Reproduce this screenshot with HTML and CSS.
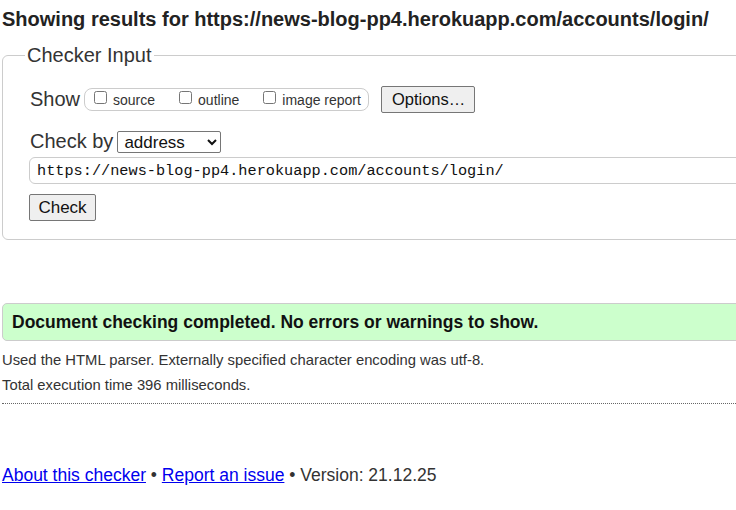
FILE: index.html
```html
<!DOCTYPE html>
<html lang="en">
<head>
<meta charset="utf-8">
<title>Showing results for https://news-blog-pp4.herokuapp.com/accounts/login/ - Nu Html Checker</title>
<link rel="stylesheet" href="styles.css">
</head>
<body>
<div class="page">
  <h2 class="title">Showing results for https://news-blog-pp4.herokuapp.com/accounts/login/</h2>
  <form class="checker">
    <fieldset class="input-box">
      <legend>Checker Input</legend>
      <div class="row show-row">
        <span class="label">Show</span>
        <span class="options">
          <label><input type="checkbox">source</label>
          <label><input type="checkbox">outline</label>
          <label><input type="checkbox">image report</label>
        </span>
        <button type="button" class="btn">Options…</button>
      </div>
      <div class="row by-row">
        <span class="label">Check by</span>
        <select class="sel"><option>address</option></select>
      </div>
      <input class="url" type="text" value="https://news-blog-pp4.herokuapp.com/accounts/login/">
      <div class="check-row">
        <button type="button" class="btn check">Check</button>
      </div>
    </fieldset>
  </form>
  <p class="success">Document checking completed. No errors or warnings to show.</p>
  <p class="details first">Used the HTML parser. Externally specified character encoding was utf-8.</p>
  <p class="details">Total execution time 396 milliseconds.</p>
  <hr class="sep">
  <p class="footer"><a href="#">About this checker</a> • <a href="#">Report an issue</a> • Version: 21.12.25</p>
</div>
</body>
</html>
```
FILE: styles.css
```css
html, body {
  margin: 0;
  padding: 0;
  overflow: hidden;
  background: #fff;
}
body {
  font-family: "Liberation Sans", Arial, sans-serif;
  color: #222;
}
.page {
  width: 1000px;
  padding: 0 0 0 2px;
}
.title {
  margin: 0;
  padding-top: 8px;
  font-size: 20px;
  font-weight: bold;
  color: #222;
  line-height: 22px;
}
.checker {
  margin: 14px 0 0 0;
}
.input-box {
  margin: 0;
  padding: 8px 26px 18px 26px;
  border: 1px solid #ccc;
  border-radius: 6px;
}
.input-box legend {
  font-size: 20px;
  padding: 0 2px;
  margin-left: -4px;
  color: #333;
}
.row {
  display: flex;
  align-items: center;
  margin-left: 1px;
}
.label {
  font-size: 20px;
  color: #333;
  margin-right: 4px;
}
.show-row {
  margin-top: 11px;
}
.options {
  display: inline-flex;
  align-items: center;
  border: 1px solid #ccc;
  border-radius: 8px;
  height: 21px;
  padding: 0 7px 0 9px;
  gap: 24px;
  margin-right: 12px;
}
.options label {
  font-size: 14px;
  color: #333;
  display: inline-flex;
  align-items: flex-end;
}
.options input {
  margin: 0 6px 4px 0;
  width: 13px;
  height: 13px;
}
.btn {
  font-family: "Liberation Sans", Arial, sans-serif;
  font-size: 16.5px;
  color: #111;
  background: #efefef;
  border: 1px solid #767676;
  border-radius: 2px;
  padding: 3px 10px;
  height: 27px;
  width: 94px;
}
.btn.check {
  width: 67px;
  font-size: 17px;
  padding: 3px 0;
}
.by-row {
  margin-top: 17px;
}
.sel {
  font-family: "Liberation Sans", Arial, sans-serif;
  font-size: 17px;
  box-sizing: border-box;
  height: 22px;
  width: 104px;
  margin-left: 0;
  border: 1px solid #767676;
  border-radius: 2px;
  background: #fff;
  color: #111;
  padding: 0 2px;
}
.url {
  display: block;
  box-sizing: border-box;
  width: 900px;
  height: 27px;
  margin: 4px 0 10px 0;
  padding: 0 7px;
  font-family: "Liberation Mono", "DejaVu Sans Mono", monospace;
  font-size: 15.25px;
  color: #111;
  border: 1px solid #ccc;
  border-radius: 6px;
}
.check-row {
  display: flex;
}
.success {
  margin: 63px 0 0 0;
  height: 38px;
  box-sizing: border-box;
  line-height: 36px;
  background: #ccffcc;
  border: 1px solid #ccc;
  border-radius: 5px;
  padding: 0 9px;
  font-size: 17.5px;
  font-weight: bold;
  color: #111;
}
.details {
  margin: 7px 0 0 0;
  font-size: 14.8px;
  color: #333;
  line-height: 18px;
}
.details.first {
  margin-top: 10px;
}
.sep {
  margin: 9px 0 0 0;
  border: 0;
  border-top: 1px dotted #666;
  height: 0;
}
.footer {
  margin: 61px 0 0 0;
  font-size: 17.5px;
  color: #333;
}
.footer a {
  color: #0000ee;
}
```
